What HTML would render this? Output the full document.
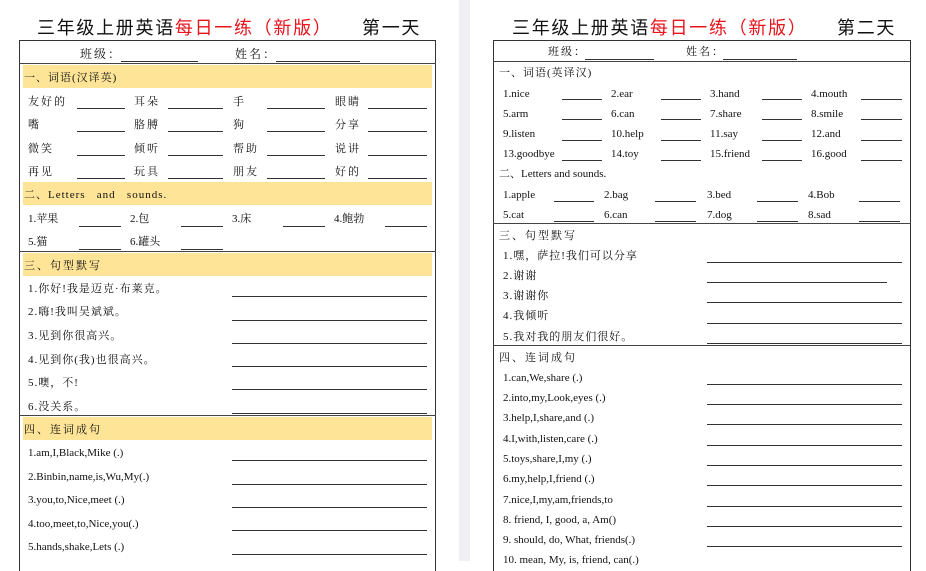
<!DOCTYPE html>
<html><head><meta charset="utf-8"><style>
body{margin:0;width:926px;height:561px;overflow:hidden;background:#fff;position:relative;font-family:"Liberation Serif","Noto Serif CJK SC",serif;color:#111}
div{position:absolute}
.t{font-size:11px;line-height:12px;white-space:nowrap}
.u{height:0;border-top:1px solid #333}
.y{background:#fde497}
.ti{font-family:"Liberation Sans","Noto Sans CJK SC",sans-serif;font-size:18px;line-height:22px;letter-spacing:1.7px;white-space:nowrap}
.r{color:#e8141c}
.b{border:1.5px solid #333;border-bottom:none}
.h{height:0;border-top:1.5px solid #444}
</style></head><body>
<div style="left:459px;top:0;width:11px;height:561px;background:#efeff4"></div>

<!-- LEFT PAGE -->
<div class="ti" style="left:37px;top:17px">三年级上册英语<span class="r">每日一练（新版）</span></div>
<div class="ti" style="left:362px;top:17px">第一天</div>
<div class="b" style="left:19px;top:40px;width:415px;height:530px"></div>
<div class="h" style="left:19px;top:63px;width:417px"></div>
<div class="t" style="left:80px;top:48px;font-size:12px;letter-spacing:2px">班级：</div>
<div class="u" style="left:121px;top:61px;width:77px"></div>
<div class="t" style="left:235px;top:48px;font-size:12px;letter-spacing:2px">姓名：</div>
<div class="u" style="left:276px;top:61px;width:84px"></div>

<div class="y" style="left:23px;top:65px;width:409px;height:23px"></div>
<div class="t" style="left:24px;top:72px;letter-spacing:1px">一、词语(汉译英)</div>
<div class="t" style="left:28px;top:96px;letter-spacing:2px">友好的</div><div class="u" style="left:77px;top:108px;width:48px"></div>
<div class="t" style="left:134px;top:96px;letter-spacing:2px">耳朵</div><div class="u" style="left:168px;top:108px;width:55px"></div>
<div class="t" style="left:233px;top:96px">手</div><div class="u" style="left:267px;top:108px;width:58px"></div>
<div class="t" style="left:335px;top:96px;letter-spacing:2px">眼睛</div><div class="u" style="left:368px;top:108px;width:59px"></div>
<div class="t" style="left:28px;top:119px">嘴</div><div class="u" style="left:77px;top:131px;width:48px"></div>
<div class="t" style="left:134px;top:119px;letter-spacing:2px">胳膊</div><div class="u" style="left:168px;top:131px;width:55px"></div>
<div class="t" style="left:233px;top:119px">狗</div><div class="u" style="left:267px;top:131px;width:58px"></div>
<div class="t" style="left:335px;top:119px;letter-spacing:2px">分享</div><div class="u" style="left:368px;top:131px;width:59px"></div>
<div class="t" style="left:28px;top:143px;letter-spacing:2px">微笑</div><div class="u" style="left:77px;top:155px;width:48px"></div>
<div class="t" style="left:134px;top:143px;letter-spacing:2px">倾听</div><div class="u" style="left:168px;top:155px;width:55px"></div>
<div class="t" style="left:233px;top:143px;letter-spacing:2px">帮助</div><div class="u" style="left:267px;top:155px;width:58px"></div>
<div class="t" style="left:335px;top:143px;letter-spacing:2px">说讲</div><div class="u" style="left:368px;top:155px;width:59px"></div>
<div class="t" style="left:28px;top:166px;letter-spacing:2px">再见</div><div class="u" style="left:77px;top:178px;width:48px"></div>
<div class="t" style="left:134px;top:166px;letter-spacing:2px">玩具</div><div class="u" style="left:168px;top:178px;width:55px"></div>
<div class="t" style="left:233px;top:166px;letter-spacing:2px">朋友</div><div class="u" style="left:267px;top:178px;width:58px"></div>
<div class="t" style="left:335px;top:166px;letter-spacing:2px">好的</div><div class="u" style="left:368px;top:178px;width:59px"></div>

<div class="y" style="left:23px;top:182px;width:409px;height:23px"></div>
<div class="t" style="left:24px;top:189px;letter-spacing:1px">二、Letters&nbsp;&nbsp; and&nbsp;&nbsp; sounds.</div>
<div class="t" style="left:28px;top:213px">1.苹果</div><div class="u" style="left:79px;top:226px;width:42px"></div>
<div class="t" style="left:130px;top:213px">2.包</div><div class="u" style="left:181px;top:226px;width:42px"></div>
<div class="t" style="left:232px;top:213px">3.床</div><div class="u" style="left:283px;top:226px;width:42px"></div>
<div class="t" style="left:334px;top:213px">4.鲍勃</div><div class="u" style="left:385px;top:226px;width:42px"></div>
<div class="t" style="left:28px;top:236px">5.猫</div><div class="u" style="left:79px;top:249px;width:42px"></div>
<div class="t" style="left:130px;top:236px">6.罐头</div><div class="u" style="left:181px;top:249px;width:42px"></div>
<div class="h" style="left:19px;top:251px;width:417px"></div>

<div class="y" style="left:23px;top:253px;width:409px;height:23px"></div>
<div class="t" style="left:24px;top:260px;letter-spacing:2px">三、句型默写</div>
<div class="t" style="left:28px;top:283px;letter-spacing:1px">1.你好!我是迈克·布莱克。</div><div class="u" style="left:232px;top:296px;width:195px"></div>
<div class="t" style="left:28px;top:306px;letter-spacing:1px">2.嗨!我叫吴斌斌。</div><div class="u" style="left:232px;top:320px;width:195px"></div>
<div class="t" style="left:28px;top:330px;letter-spacing:1px">3.见到你很高兴。</div><div class="u" style="left:232px;top:343px;width:195px"></div>
<div class="t" style="left:28px;top:354px;letter-spacing:1px">4.见到你(我)也很高兴。</div><div class="u" style="left:232px;top:366px;width:195px"></div>
<div class="t" style="left:28px;top:377px;letter-spacing:1px">5.噢，不!</div><div class="u" style="left:232px;top:389px;width:195px"></div>
<div class="t" style="left:28px;top:401px;letter-spacing:1px">6.没关系。</div><div class="u" style="left:232px;top:413px;width:195px"></div>
<div class="h" style="left:19px;top:415px;width:417px"></div>

<div class="y" style="left:23px;top:417px;width:409px;height:23px"></div>
<div class="t" style="left:24px;top:424px;letter-spacing:2px">四、连词成句</div>
<div class="t" style="left:28px;top:447px">1.am,I,Black,Mike (.)</div><div class="u" style="left:232px;top:460px;width:195px"></div>
<div class="t" style="left:28px;top:471px">2.Binbin,name,is,Wu,My(.)</div><div class="u" style="left:232px;top:484px;width:195px"></div>
<div class="t" style="left:28px;top:494px">3.you,to,Nice,meet (.)</div><div class="u" style="left:232px;top:507px;width:195px"></div>
<div class="t" style="left:28px;top:518px">4.too,meet,to,Nice,you(.)</div><div class="u" style="left:232px;top:530px;width:195px"></div>
<div class="t" style="left:28px;top:541px">5.hands,shake,Lets (.)</div><div class="u" style="left:232px;top:554px;width:195px"></div>

<!-- RIGHT PAGE -->
<div class="ti" style="left:512px;top:17px">三年级上册英语<span class="r">每日一练（新版）</span></div>
<div class="ti" style="left:837px;top:17px">第二天</div>
<div class="b" style="left:493px;top:40px;width:416px;height:530px"></div>
<div class="h" style="left:493px;top:61px;width:418px"></div>
<div class="t" style="left:548px;top:46px;letter-spacing:2px">班级：</div>
<div class="u" style="left:585px;top:59px;width:69px"></div>
<div class="t" style="left:686px;top:46px;letter-spacing:2px">姓名：</div>
<div class="u" style="left:723px;top:59px;width:74px"></div>

<div class="t" style="left:499px;top:67px;letter-spacing:1px">一、词语(英译汉)</div>
<div class="t" style="left:503px;top:88px">1.nice</div><div class="u" style="left:562px;top:99px;width:40px"></div>
<div class="t" style="left:611px;top:88px">2.ear</div><div class="u" style="left:661px;top:99px;width:40px"></div>
<div class="t" style="left:710px;top:88px">3.hand</div><div class="u" style="left:762px;top:99px;width:40px"></div>
<div class="t" style="left:811px;top:88px">4.mouth</div><div class="u" style="left:861px;top:99px;width:41px"></div>
<div class="t" style="left:503px;top:108px">5.arm</div><div class="u" style="left:562px;top:119px;width:40px"></div>
<div class="t" style="left:611px;top:108px">6.can</div><div class="u" style="left:661px;top:119px;width:40px"></div>
<div class="t" style="left:710px;top:108px">7.share</div><div class="u" style="left:762px;top:119px;width:40px"></div>
<div class="t" style="left:811px;top:108px">8.smile</div><div class="u" style="left:861px;top:119px;width:41px"></div>
<div class="t" style="left:503px;top:128px">9.listen</div><div class="u" style="left:562px;top:140px;width:40px"></div>
<div class="t" style="left:611px;top:128px">10.help</div><div class="u" style="left:661px;top:140px;width:40px"></div>
<div class="t" style="left:710px;top:128px">11.say</div><div class="u" style="left:762px;top:140px;width:40px"></div>
<div class="t" style="left:811px;top:128px">12.and</div><div class="u" style="left:861px;top:140px;width:41px"></div>
<div class="t" style="left:503px;top:148px">13.goodbye</div><div class="u" style="left:562px;top:160px;width:40px"></div>
<div class="t" style="left:611px;top:148px">14.toy</div><div class="u" style="left:661px;top:160px;width:40px"></div>
<div class="t" style="left:710px;top:148px">15.friend</div><div class="u" style="left:762px;top:160px;width:40px"></div>
<div class="t" style="left:811px;top:148px">16.good</div><div class="u" style="left:861px;top:160px;width:41px"></div>

<div class="t" style="left:499px;top:168px">二、Letters and sounds.</div>
<div class="t" style="left:503px;top:189px">1.apple</div><div class="u" style="left:554px;top:201px;width:40px"></div>
<div class="t" style="left:604px;top:189px">2.bag</div><div class="u" style="left:655px;top:201px;width:41px"></div>
<div class="t" style="left:707px;top:189px">3.bed</div><div class="u" style="left:757px;top:201px;width:41px"></div>
<div class="t" style="left:808px;top:189px">4.Bob</div><div class="u" style="left:859px;top:201px;width:41px"></div>
<div class="t" style="left:503px;top:209px">5.cat</div><div class="u" style="left:554px;top:221px;width:40px"></div>
<div class="t" style="left:604px;top:209px">6.can</div><div class="u" style="left:655px;top:221px;width:41px"></div>
<div class="t" style="left:707px;top:209px">7.dog</div><div class="u" style="left:757px;top:221px;width:41px"></div>
<div class="t" style="left:808px;top:209px">8.sad</div><div class="u" style="left:859px;top:221px;width:41px"></div>
<div class="h" style="left:493px;top:223px;width:418px"></div>

<div class="t" style="left:499px;top:230px;letter-spacing:2px">三、句型默写</div>
<div class="t" style="left:503px;top:250px;letter-spacing:1px">1.嘿，萨拉!我们可以分享</div><div class="u" style="left:707px;top:262px;width:195px"></div>
<div class="t" style="left:503px;top:270px;letter-spacing:1px">2.谢谢</div><div class="u" style="left:707px;top:282px;width:180px"></div>
<div class="t" style="left:503px;top:290px;letter-spacing:1px">3.谢谢你</div><div class="u" style="left:707px;top:302px;width:195px"></div>
<div class="t" style="left:503px;top:310px;letter-spacing:1px">4.我倾听</div><div class="u" style="left:707px;top:323px;width:195px"></div>
<div class="t" style="left:503px;top:331px;letter-spacing:1px">5.我对我的朋友们很好。</div><div class="u" style="left:707px;top:343px;width:195px"></div>
<div class="h" style="left:493px;top:345px;width:418px"></div>

<div class="t" style="left:499px;top:352px;letter-spacing:2px">四、连词成句</div>
<div class="t" style="left:503px;top:372px">1.can,We,share (.)</div><div class="u" style="left:707px;top:384px;width:195px"></div>
<div class="t" style="left:503px;top:392px">2.into,my,Look,eyes (.)</div><div class="u" style="left:707px;top:404px;width:195px"></div>
<div class="t" style="left:503px;top:412px">3.help,I,share,and (.)</div><div class="u" style="left:707px;top:424px;width:195px"></div>
<div class="t" style="left:503px;top:433px">4.I,with,listen,care (.)</div><div class="u" style="left:707px;top:445px;width:195px"></div>
<div class="t" style="left:503px;top:453px">5.toys,share,I,my (.)</div><div class="u" style="left:707px;top:465px;width:195px"></div>
<div class="t" style="left:503px;top:473px">6.my,help,I,friend (.)</div><div class="u" style="left:707px;top:485px;width:195px"></div>
<div class="t" style="left:503px;top:494px">7.nice,I,my,am,friends,to</div><div class="u" style="left:707px;top:506px;width:195px"></div>
<div class="t" style="left:503px;top:514px">8. friend, I, good, a, Am()</div><div class="u" style="left:707px;top:526px;width:195px"></div>
<div class="t" style="left:503px;top:534px">9. should, do, What, friends(.)</div><div class="u" style="left:707px;top:546px;width:195px"></div>
<div class="t" style="left:503px;top:554px">10. mean, My, is, friend, can(.)</div>
</body></html>
